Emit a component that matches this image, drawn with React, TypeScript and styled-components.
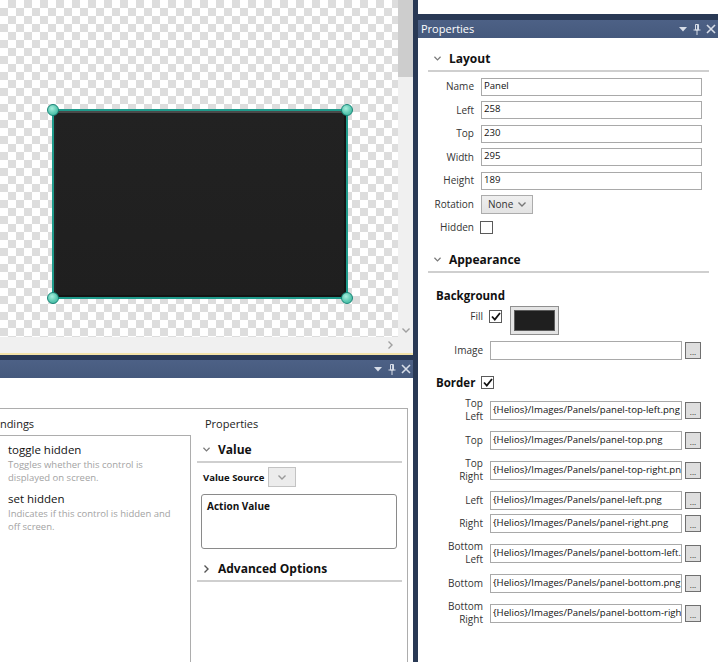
import React from "react";
import styled, { createGlobalStyle } from "styled-components";

const FONT = `"Open Sans", "Liberation Sans", sans-serif`;
const FRAME = "#293955";
const TITLE = "#45597d";
const FIELD_BORDER = "#a9a9a9";

const layoutFields = [
  { label: "Name", value: "Panel" },
  { label: "Left", value: "258" },
  { label: "Top", value: "230" },
  { label: "Width", value: "295" },
  { label: "Height", value: "189" },
];

const borderImages = [
  { label: ["Top", "Left"], value: "{Helios}/Images/Panels/panel-top-left.png" },
  { label: ["Top"], value: "{Helios}/Images/Panels/panel-top.png" },
  { label: ["Top", "Right"], value: "{Helios}/Images/Panels/panel-top-right.png" },
  { label: ["Left"], value: "{Helios}/Images/Panels/panel-left.png" },
  { label: ["Right"], value: "{Helios}/Images/Panels/panel-right.png" },
  { label: ["Bottom", "Left"], value: "{Helios}/Images/Panels/panel-bottom-left.png" },
  { label: ["Bottom"], value: "{Helios}/Images/Panels/panel-bottom.png" },
  { label: ["Bottom", "Right"], value: "{Helios}/Images/Panels/panel-bottom-right.png" },
];

const actions = [
  { name: "toggle hidden", desc: ["Toggles whether this control is", "displayed on screen."] },
  { name: "set hidden", desc: ["Indicates if this control is hidden and", "off screen."] },
];

const GlobalStyle = createGlobalStyle`
  html, body {
    margin: 0;
    padding: 0;
    background: ${FRAME};
  }
  body {
    font-family: ${FONT};
    color: #1e1e1e;
  }
  * {
    box-sizing: border-box;
  }
`;

const Shell = styled.div`
  width: 718px;
  height: 662px;
  display: grid;
  grid-template-columns: 413px 300px;
  column-gap: 5px;
  background: ${FRAME};
  overflow: hidden;
`;

const Column = styled.div`
  display: flex;
  flex-direction: column;
  min-height: 0;
`;

/* ---------- designer ---------- */

const Designer = styled.div`
  height: 353px;
  display: grid;
  grid-template-columns: 398px 15px;
  grid-template-rows: 337px 16px;
  background: #f0f0f0;
`;

const Canvas = styled.div`
  position: relative;
  overflow: hidden;
  background: repeating-conic-gradient(#dddddd 0 25%, #ffffff 0 50%) 0 0 / 16px 16px;
`;

const PanelShape = styled.div`
  position: absolute;
  left: 52px;
  top: 109px;
  width: 296px;
  height: 190px;
  border: 2px solid #1f9a8b;
`;

const PanelFace = styled.div`
  width: 100%;
  height: 100%;
  border-radius: 4px;
  background: linear-gradient(to bottom, #4a4a4a 0, #4a4a4a 2px, #222 2px, #1f1f1f 100%);
  box-shadow: inset -2px -2px 0 #151515, inset 2px 0 0 #262626;
`;

const Handle = styled.span<{ $x: "left" | "right"; $y: "top" | "bottom" }>`
  position: absolute;
  ${(p) => p.$x}: -7px;
  ${(p) => p.$y}: -7px;
  width: 12px;
  height: 12px;
  border-radius: 50%;
  background: radial-gradient(circle at 40% 35%, #a8eedd 0, #5cc9b2 55%, #3bb39b 100%);
  border: 1.5px solid #168577;
`;

const VScroll = styled.div`
  display: flex;
  flex-direction: column;
  justify-content: space-between;
  align-items: center;
  background: #f0f0f0;
  padding-bottom: 4px;
`;

const ScrollThumb = styled.div`
  align-self: stretch;
  height: 77px;
  background: #cdcdcd;
`;

const HScroll = styled.div`
  display: flex;
  justify-content: flex-end;
  align-items: center;
  padding-right: 5px;
  background: #f0f0f0;
`;

const ScrollCorner = styled.div`
  background: #f0f0f0;
`;

const StatusLine = styled.div`
  height: 2px;
  background: #f3e3a9;
`;

/* ---------- tool windows ---------- */

const ToolWindow = styled.section<{ $gap: number }>`
  flex: 1;
  min-height: 0;
  margin-top: ${(p) => p.$gap}px;
  display: flex;
  flex-direction: column;
`;

const TitleBar = styled.header`
  height: 18px;
  flex-shrink: 0;
  display: flex;
  align-items: center;
  justify-content: space-between;
  padding: 0 2px 0 3px;
  background: linear-gradient(to bottom, #4d6186, ${TITLE});
  color: #ffffff;
  font-size: 11px;
  line-height: 18px;
`;

const TitleIcons = styled.div`
  display: flex;
  align-items: center;
  gap: 4px;
  margin-left: auto;
`;

const IconSlot = styled.span`
  width: 10px;
  height: 12px;
  display: flex;
  align-items: center;
  justify-content: center;
`;

const ToolBody = styled.div`
  flex: 1;
  min-height: 0;
  background: #ffffff;
  overflow: hidden;
`;

const TopStrip = styled.div`
  height: 14px;
  background: #ffffff;
`;

function WindowIcons() {
  return (
    <TitleIcons>
      <IconSlot>
        <svg width="8" height="5" viewBox="0 0 8 5">
          <path d="M0 0 H8 L4 4.5 Z" fill="#d7dde8" />
        </svg>
      </IconSlot>
      <IconSlot>
        <svg width="8" height="11" viewBox="0 0 8 11">
          <path d="M2.5 0.5 H5.5 V6 H2.5 Z M0.5 6 H7.5 M4 6 V11 M4.6 0.5 V6" stroke="#d7dde8" strokeWidth="1" fill="none" />
        </svg>
      </IconSlot>
      <IconSlot>
        <svg width="10" height="10" viewBox="0 0 10 10">
          <path d="M1 1 L9 9 M9 1 L1 9" stroke="#d7dde8" strokeWidth="1.6" />
        </svg>
      </IconSlot>
    </TitleIcons>
  );
}

function Chevron({ dir, color = "#7a7a7a" }: { dir: "down" | "right"; color?: string }) {
  return dir === "down" ? (
    <svg width="8" height="5" viewBox="0 0 8 5">
      <path d="M0.5 0.5 L4 4 L7.5 0.5" stroke={color} strokeWidth="1.4" fill="none" />
    </svg>
  ) : (
    <svg width="5" height="8" viewBox="0 0 5 8">
      <path d="M0.5 0.5 L4 4 L0.5 7.5" stroke={color} strokeWidth="1.4" fill="none" />
    </svg>
  );
}

/* ---------- property grid ---------- */

const PropsBody = styled.div`
  padding: 11px 9px 0 10px;
`;

const SectionHeader = styled.div<{ $top?: number }>`
  height: 23px;
  margin-top: ${(p) => p.$top ?? 0}px;
  display: flex;
  align-items: center;
  gap: 8px;
  padding: 0 0 2px 6px;
  border-bottom: 2px solid #cfcfcf;
`;

const SectionTitle = styled.span`
  font-size: 12px;
  font-weight: 700;
  color: #111;
`;

const ChevronSlot = styled.span`
  width: 7px;
  display: flex;
  justify-content: center;
`;

const FieldList = styled.div`
  margin-top: 3px;
`;

const FieldRow = styled.div<{ $h: number; $top?: number }>`
  height: ${(p) => p.$h}px;
  margin-top: ${(p) => p.$top ?? 0}px;
  display: flex;
  align-items: center;
`;

const FieldLabel = styled.div<{ $w: number }>`
  width: ${(p) => p.$w}px;
  flex-shrink: 0;
  text-align: right;
  font-size: 10px;
  line-height: 13px;
  color: #333;
`;

const TextField = styled.div<{ $w: number; $h: number; $gap: number }>`
  width: ${(p) => p.$w}px;
  height: ${(p) => p.$h}px;
  margin-left: ${(p) => p.$gap}px;
  flex-shrink: 0;
  border: 1px solid ${FIELD_BORDER};
  background: #ffffff;
  padding: 0 2px;
  font-size: 9.6px;
  line-height: ${(p) => p.$h - 4}px;
  color: #111;
  white-space: nowrap;
  overflow: hidden;
  text-overflow: clip;
`;

const Select = styled.div<{ $w: number; $gap: number }>`
  width: ${(p) => p.$w}px;
  height: 19px;
  margin-left: ${(p) => p.$gap}px;
  display: flex;
  align-items: center;
  justify-content: space-between;
  padding: 0 6px 0 6px;
  border: 1px solid #acacac;
  background: linear-gradient(to bottom, #efefef, #e3e3e3);
  font-size: 10px;
  color: #333;
`;

const Checkbox = styled.span<{ $gap: number }>`
  width: 13px;
  height: 13px;
  margin-left: ${(p) => p.$gap}px;
  flex-shrink: 0;
  display: flex;
  align-items: center;
  justify-content: center;
  border: 1px solid #5a5a5a;
  background: #ffffff;
`;

function Check({ checked, gap }: { checked?: boolean; gap: number }) {
  return (
    <Checkbox $gap={gap}>
      {checked && (
        <svg width="10" height="9" viewBox="0 0 10 9">
          <path d="M1 4.5 L3.8 7.5 L9 1" stroke="#111" strokeWidth="1.8" fill="none" />
        </svg>
      )}
    </Checkbox>
  );
}

const SubHeading = styled.div<{ $top: number }>`
  margin-top: ${(p) => p.$top}px;
  padding-left: 8px;
  height: 18px;
  display: flex;
  align-items: center;
  font-size: 11.5px;
  font-weight: 700;
  color: #111;
`;

const FillRow = styled.div`
  margin-top: 1px;
  height: 30px;
  display: flex;
  align-items: flex-start;
  padding-top: 4px;
`;

const Swatch = styled.div`
  width: 49px;
  height: 29px;
  margin: -4px 0 0 8px;
  padding: 3px;
  border: 1px solid #8f8f8f;
  background: #e4e4e4;
`;

const SwatchColor = styled.div`
  width: 100%;
  height: 100%;
  background: #1f1f1f;
  border: 1px solid #5c5c5c;
`;

const BrowseButton = styled.div`
  width: 16px;
  height: 17px;
  margin-left: 3px;
  flex-shrink: 0;
  display: flex;
  align-items: flex-end;
  justify-content: center;
  padding-bottom: 2px;
  border: 1px solid #707070;
  background: #dedede;
  font-size: 8px;
  line-height: 8px;
  color: #222;
`;

/* ---------- bindings window ---------- */

const BindingsFrame = styled.div`
  width: 422px;
  height: 300px;
  margin: 30px 0 0 -14px;
  border: 1px solid #adadad;
  border-bottom: none;
  display: grid;
  grid-template-columns: 204px 205px;
  column-gap: 6px;
  padding-right: 5px;
`;

const ColumnHeading = styled.div<{ $pad: number }>`
  margin-top: 7px;
  padding-left: ${(p) => p.$pad}px;
  font-size: 11px;
  line-height: 15px;
  color: #222;
`;

const ActionList = styled.div`
  margin-top: 4px;
  height: 240px;
  border: 1px solid #adadad;
  border-left: none;
  border-bottom: none;
  padding: 5px 0 0 21px;
  display: flex;
  flex-direction: column;
  gap: 6px;
`;

const ActionName = styled.div`
  font-size: 11.5px;
  line-height: 17px;
  color: #111;
`;

const ActionDesc = styled.div`
  font-size: 9.5px;
  line-height: 13px;
  color: #a3a3a3;
`;

const ValueColumn = styled.div`
  display: flex;
  flex-direction: column;
`;

const ValueSourceRow = styled.div`
  height: 20px;
  margin-top: 4px;
  padding-left: 6px;
  display: flex;
  align-items: center;
  font-size: 9.5px;
  font-weight: 700;
  color: #111;
`;

const ValueSelect = styled.div`
  width: 28px;
  height: 20px;
  margin-left: 4px;
  display: flex;
  align-items: center;
  justify-content: center;
  border: 1px solid #c3c3c3;
  background: #ececec;
`;

const ActionValueBox = styled.div`
  height: 55px;
  margin: 7px 5px 0 4px;
  padding: 4px 5px;
  border: 1px solid #8a8a8a;
  border-radius: 3px;
  font-size: 10px;
  font-weight: 700;
  color: #111;
`;

export default function App() {
  return (
    <>
      <GlobalStyle />
      <Shell>
        <Column>
          <Designer>
            <Canvas>
              <PanelShape>
                <PanelFace />
                <Handle $x="left" $y="top" />
                <Handle $x="right" $y="top" />
                <Handle $x="left" $y="bottom" />
                <Handle $x="right" $y="bottom" />
              </PanelShape>
            </Canvas>
            <VScroll>
              <ScrollThumb />
              <Chevron dir="down" color="#a0a0a0" />
            </VScroll>
            <HScroll>
              <Chevron dir="right" color="#a0a0a0" />
            </HScroll>
            <ScrollCorner />
          </Designer>
          <StatusLine />
          <ToolWindow $gap={5}>
            <TitleBar>
              <WindowIcons />
            </TitleBar>
            <ToolBody>
              <BindingsFrame>
                <div>
                  <ColumnHeading $pad={3}>Bindings</ColumnHeading>
                  <ActionList>
                    {actions.map((a) => (
                      <div key={a.name}>
                        <ActionName>{a.name}</ActionName>
                        {a.desc.map((line) => (
                          <ActionDesc key={line}>{line}</ActionDesc>
                        ))}
                      </div>
                    ))}
                  </ActionList>
                </div>
                <ValueColumn>
                  <ColumnHeading $pad={8}>Properties</ColumnHeading>
                  <SectionHeader $top={9}>
                    <ChevronSlot>
                      <Chevron dir="down" />
                    </ChevronSlot>
                    <SectionTitle>Value</SectionTitle>
                  </SectionHeader>
                  <ValueSourceRow>
                    Value Source
                    <ValueSelect>
                      <Chevron dir="down" color="#999" />
                    </ValueSelect>
                  </ValueSourceRow>
                  <ActionValueBox>Action Value</ActionValueBox>
                  <SectionHeader $top={10}>
                    <ChevronSlot>
                      <Chevron dir="right" color="#555" />
                    </ChevronSlot>
                    <SectionTitle>Advanced Options</SectionTitle>
                  </SectionHeader>
                </ValueColumn>
              </BindingsFrame>
            </ToolBody>
          </ToolWindow>
        </Column>

        <Column>
          <TopStrip />
          <ToolWindow $gap={6}>
            <TitleBar>
              <span>Properties</span>
              <WindowIcons />
            </TitleBar>
            <ToolBody>
              <PropsBody>
                <SectionHeader>
                  <ChevronSlot>
                    <Chevron dir="down" />
                  </ChevronSlot>
                  <SectionTitle>Layout</SectionTitle>
                </SectionHeader>
                <FieldList>
                  {layoutFields.map((f) => (
                    <FieldRow key={f.label} $h={23.5}>
                      <FieldLabel $w={46}>{f.label}</FieldLabel>
                      <TextField $w={221} $h={18} $gap={7}>
                        {f.value}
                      </TextField>
                    </FieldRow>
                  ))}
                  <FieldRow $h={23.5}>
                    <FieldLabel $w={46}>Rotation</FieldLabel>
                    <Select $w={52} $gap={7}>
                      None
                      <Chevron dir="down" color="#777" />
                    </Select>
                  </FieldRow>
                  <FieldRow $h={23.5}>
                    <FieldLabel $w={46}>Hidden</FieldLabel>
                    <Check gap={6} />
                  </FieldRow>
                </FieldList>

                <SectionHeader $top={10}>
                  <ChevronSlot>
                    <Chevron dir="down" />
                  </ChevronSlot>
                  <SectionTitle>Appearance</SectionTitle>
                </SectionHeader>

                <SubHeading $top={14}>Background</SubHeading>
                <FillRow>
                  <FieldLabel $w={55}>Fill</FieldLabel>
                  <Check checked gap={6} />
                  <Swatch>
                    <SwatchColor />
                  </Swatch>
                </FillRow>
                <FieldRow $h={19} $top={5}>
                  <FieldLabel $w={55}>Image</FieldLabel>
                  <TextField $w={192} $h={19} $gap={7} />
                  <BrowseButton>...</BrowseButton>
                </FieldRow>

                <SubHeading $top={14}>
                  Border
                  <Check checked gap={6} />
                </SubHeading>
                {borderImages.map((b) => (
                  <FieldRow key={b.value} $h={b.label.length > 1 ? 37 : 23}>
                    <FieldLabel $w={55}>
                      {b.label.map((l) => (
                        <div key={l}>{l}</div>
                      ))}
                    </FieldLabel>
                    <TextField $w={192} $h={19} $gap={7}>
                      {b.value}
                    </TextField>
                    <BrowseButton>...</BrowseButton>
                  </FieldRow>
                ))}
              </PropsBody>
            </ToolBody>
          </ToolWindow>
        </Column>
      </Shell>
    </>
  );
}
